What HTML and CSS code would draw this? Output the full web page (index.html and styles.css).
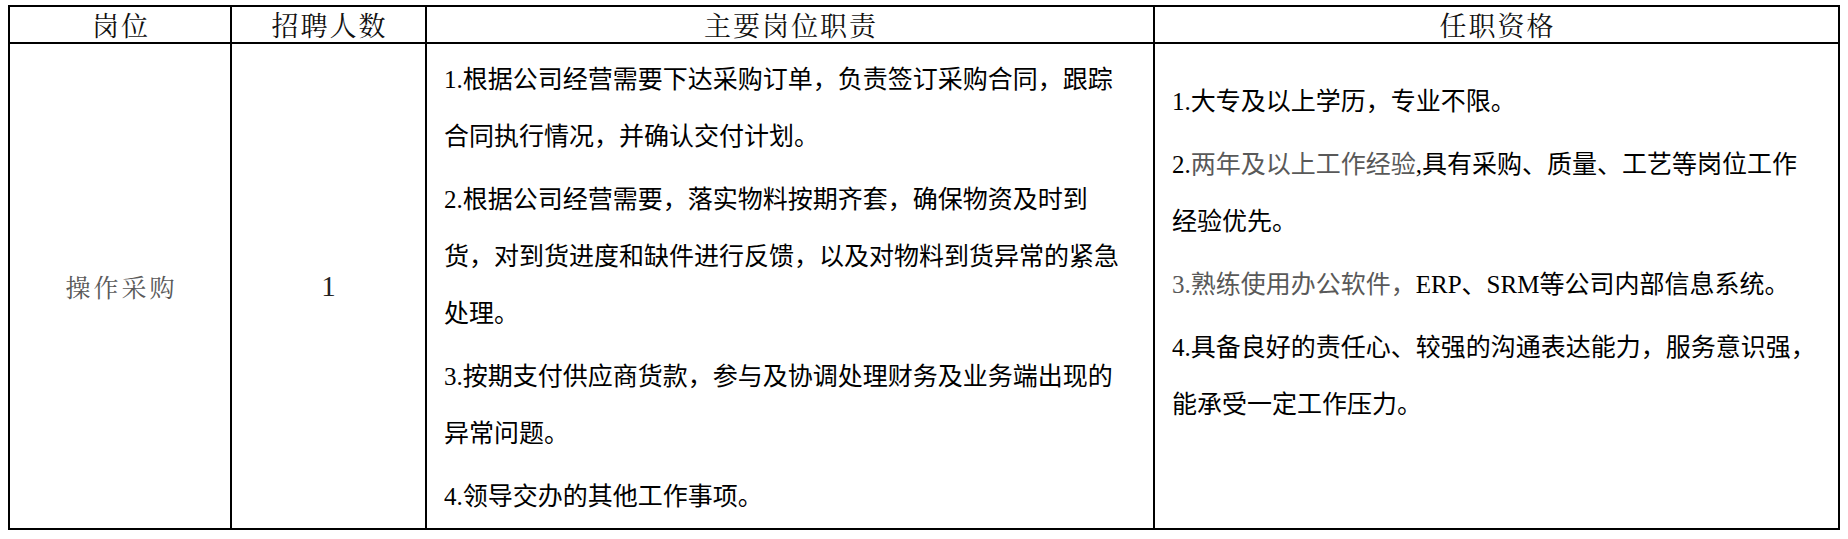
FILE: index.html
```html
<!DOCTYPE html>
<html lang="zh-CN">
<head>
<meta charset="utf-8">
<title>岗位职责</title>
<link rel="stylesheet" href="styles.css">
</head>
<body>
<div class="table">
  <div class="cell head">岗位</div>
  <div class="cell head">招聘人数</div>
  <div class="cell head">主要岗位职责</div>
  <div class="cell head">任职资格</div>
  <div class="cell center name">操作采购</div>
  <div class="cell center num">1</div>
  <div class="cell text duties">
    <p>1.根据公司经营需要下达采购订单，负责签订采购合同，跟踪合同执行情况，并确认交付计划。</p>
    <p>2.根据公司经营需要，落实物料按期齐套，确保物资及时到货，对到货进度和缺件进行反馈，以及对物料到货异常的紧急处理。</p>
    <p>3.按期支付供应商货款，参与及协调处理财务及业务端出现的异常问题。</p>
    <p>4.领导交办的其他工作事项。</p>
  </div>
  <div class="cell text reqs">
    <p>1.大专及以上学历，专业不限。</p>
    <p>2.<span class="muted">两年及以上工作经验</span>,具有采购、质量、工艺等岗位工作经验优先。</p>
    <p><span class="muted">3.熟练使用办公软件，</span>ERP、SRM等公司内部信息系统。</p>
    <p>4.具备良好的责任心、较强的沟通表达能力，服务意识强，能承受一定工作压力。</p>
  </div>
</div>
</body>
</html>
```
FILE: styles.css
```css
html, body {
  margin: 0;
  padding: 0;
  background: #ffffff;
}

body {
  font-family: "Liberation Serif", "Noto Sans CJK SC", sans-serif;
  color: #000000;
}

.table {
  display: grid;
  grid-template-columns: 222px 195px 728px 685px;
  grid-template-rows: 37px 486px;
  width: max-content;
  margin: 5px 0 0 8px;
  border-top: 2px solid #000000;
  border-left: 2px solid #000000;
}

.cell {
  box-sizing: border-box;
  border-right: 2px solid #000000;
  border-bottom: 2px solid #000000;
}

.head {
  display: flex;
  align-items: center;
  justify-content: center;
  padding-left: 2px;
  font-family: "Noto Serif CJK SC", "Noto Sans CJK SC", serif;
  font-size: 27px;
  letter-spacing: 2px;
  line-height: 1;
  color: #111111;
}

.center {
  display: flex;
  align-items: center;
  justify-content: center;
}

.name {
  padding-left: 3px;
  font-family: "Noto Serif CJK SC", "Noto Sans CJK SC", serif;
  font-size: 25px;
  letter-spacing: 3px;
  color: #595959;
}

.num {
  font-family: "Liberation Serif", serif;
  font-size: 29px;
  color: #222222;
}

.text {
  font-size: 25px;
  line-height: 57px;
}

.text p {
  margin: 0 0 6px 0;
}

.duties {
  padding: 7px 24px 0 17px;
}

.reqs {
  padding: 29px 19px 0 17px;
}

.muted {
  color: #595959;
}
```
